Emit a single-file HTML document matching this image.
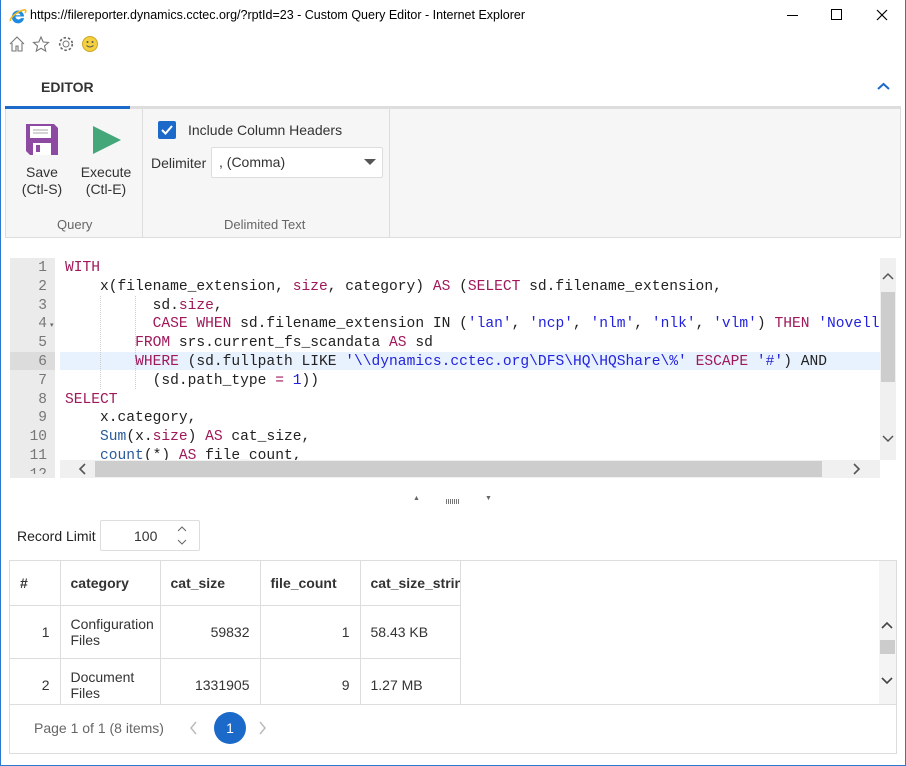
<!DOCTYPE html>
<html><head><style>
*{margin:0;padding:0;box-sizing:border-box}
body{width:906px;height:766px;overflow:hidden;background:#fff;font-family:"Liberation Sans",sans-serif;position:relative}
.a{position:absolute}
.code{font-family:"Liberation Mono",monospace;font-size:14.6px;white-space:pre;color:#222}
.k{color:#a0185a}.s{color:#2222dd}.f{color:#2a5a9a}.n{color:#2222dd}
.ln{font-family:"Liberation Mono",monospace;font-size:14.5px;color:#777;width:37px;text-align:right}
table{table-layout:fixed;border-collapse:collapse}
th,td{border-right:1px solid #ddd;border-bottom:1px solid #ddd;font-size:14px;color:#333;padding:0 10px;overflow:hidden;white-space:normal}
th{text-align:left;font-weight:bold;height:44px;white-space:nowrap}
td{height:53px}
</style></head><body>
<div class="a" style="left:0;top:0;width:906px;height:766px;border:1px solid #2b79d0;border-top:none"></div>
<svg class="a" style="left:9px;top:7px" width="18" height="18" viewBox="0 0 18 18"><path d="M3 9.5a6 6 0 0 1 12 0H6.5a3 3 0 0 0 5.5 1.6h3A6 6 0 0 1 3 9.5zm3.5-1.3h5a2.6 2.6 0 0 0-5 0z" fill="#1d8be0"/><path d="M1.5 14c-1-3 6-9 13-11 2.5-.7 2.8 1 1.5 3" fill="none" stroke="#f4b81b" stroke-width="1.6"/></svg>
<div class="a" style="left:30px;top:8px;font-size:12.5px;color:#000">https://filereporter.dynamics.cctec.org/?rptId=23 - Custom Query Editor - Internet Explorer</div>
<div class="a" style="left:787px;top:15px;width:11px;height:1px;background:#000"></div>
<div class="a" style="left:831px;top:9px;width:11px;height:11px;border:1px solid #000"></div>
<svg class="a" style="left:876px;top:9px" width="12" height="12"><path d="M1 1l10 10M11 1L1 11" stroke="#000" stroke-width="1.2"/></svg>
<svg class="a" style="left:8px;top:35px" width="90" height="18" viewBox="0 0 90 18"><path d="M2 9L9 2l7 7M4 8v8h4v-5h2v5h4V8" fill="none" stroke="#777" stroke-width="1.1"/><path d="M33 2l2.2 5 5.3.4-4 3.5 1.2 5.2-4.7-2.8-4.7 2.8 1.2-5.2-4-3.5 5.3-.4z" fill="none" stroke="#777" stroke-width="1.1"/><circle cx="58" cy="9" r="3" fill="none" stroke="#777"/><circle cx="58" cy="9" r="6.3" fill="none" stroke="#666" stroke-width="1.6" stroke-dasharray="2.5 2"/><circle cx="82" cy="9" r="7.5" fill="#f4d03f" stroke="#c9a62c"/><circle cx="79.5" cy="7" r="1" fill="#555"/><circle cx="84.5" cy="7" r="1" fill="#555"/><path d="M78.5 10.5q3.5 3 7 0" fill="none" stroke="#555"/></svg>
<div class="a" style="left:41px;top:79px;font-size:14px;font-weight:bold;color:#333">EDITOR</div>
<svg class="a" style="left:877px;top:82px" width="13" height="9"><path d="M1 7l5.5-5 5.5 5" fill="none" stroke="#1b6ac9" stroke-width="2"/></svg>
<div class="a" style="left:5px;top:106px;width:896px;height:3px;background:#ddd"></div>
<div class="a" style="left:5px;top:106px;width:125px;height:3px;background:#1b6ac9"></div>
<div class="a" style="left:5px;top:109px;width:896px;height:129px;background:#f6f6f6;border:1px solid #ddd;border-top:none"></div>
<div class="a" style="left:142px;top:109px;width:1px;height:129px;background:#ddd"></div>
<div class="a" style="left:389px;top:109px;width:1px;height:129px;background:#ddd"></div>
<svg class="a" style="left:26px;top:124px" width="32" height="31" viewBox="0 0 32 31"><path d="M0 0h28l4 4v27H4l-4-4z" fill="#8e4aa2"/><rect x="4" y="2" width="21" height="12" fill="#fff"/><path d="M7 6h15M7 9h15" stroke="#aaa"/><rect x="7" y="19" width="18" height="12" fill="#fff"/><rect x="10" y="21" width="4" height="7" fill="#8e4aa2"/></svg>
<svg class="a" style="left:92px;top:125px" width="30" height="30"><path d="M1 1l28 14L1 29z" fill="#43a77a"/></svg>
<div class="a" style="left:18px;top:164px;width:48px;text-align:center;font-size:14px;color:#333;line-height:17px">Save<br>(Ctl-S)</div>
<div class="a" style="left:78px;top:164px;width:56px;text-align:center;font-size:14px;color:#333;line-height:17px">Execute<br>(Ctl-E)</div>
<div class="a" style="left:57px;top:217px;font-size:13px;color:#666">Query</div>
<div class="a" style="left:158px;top:121px;width:18px;height:18px;background:#1b6ac9;border-radius:2px"></div>
<svg class="a" style="left:160px;top:123px" width="14" height="14"><path d="M2 7l3.5 3.5L12 3" fill="none" stroke="#fff" stroke-width="2"/></svg>
<div class="a" style="left:188px;top:122px;font-size:14px;color:#333">Include Column Headers</div>
<div class="a" style="left:151px;top:155px;font-size:14px;color:#333">Delimiter</div>
<div class="a" style="left:211px;top:147px;width:172px;height:31px;background:#fff;border:1px solid #ddd;border-radius:2px"></div>
<div class="a" style="left:219px;top:154px;font-size:14px;color:#333">, (Comma)</div>
<svg class="a" style="left:364px;top:159px" width="12" height="7"><path d="M0 0h12L6 6z" fill="#555"/></svg>
<div class="a" style="left:224px;top:217px;font-size:13px;color:#666">Delimited Text</div>
<div class="a" style="left:10px;top:258px;width:45px;height:220px;background:#ebebeb"></div>
<div class="a" style="left:10px;top:352px;width:45px;height:18px;background:#dcdcdc"></div>
<div class="a" style="left:60px;top:352px;width:820px;height:18px;background:#e8f2fe"></div>
<div class="a" style="left:100px;top:296px;height:93px;border-left:1px dotted #ccc"></div>
<div class="a" style="left:135px;top:296px;height:93px;border-left:1px dotted #ccc"></div>
<div class="a" style="left:0;top:259px;width:880px;height:215px;overflow:hidden">
<div class="a ln" style="left:10px;top:0;line-height:18.8px">1<br>2<br>3<br>4<br>5<br>6<br>7<br>8<br>9<br>10<br>11<br>12</div>
<div class="a" style="left:50px;top:62px;font-size:7px;color:#666">▾</div>
<div class="a code" style="left:65px;top:0;line-height:18.8px"><span class="k">WITH</span>
    x(filename_extension, <span class="k">size</span>, category) <span class="k">AS</span> (<span class="k">SELECT</span> sd.filename_extension,
          sd.<span class="k">size</span>,
          <span class="k">CASE WHEN</span> sd.filename_extension IN (<span class="s">'lan'</span>, <span class="s">'ncp'</span>, <span class="s">'nlm'</span>, <span class="s">'nlk'</span>, <span class="s">'vlm'</span>) <span class="k">THEN</span> <span class="s">'Novell</span>
        <span class="k">FROM</span> srs.current_fs_scandata <span class="k">AS</span> sd
        <span class="k">WHERE</span> (sd.fullpath LIKE <span class="s">'\\dynamics.cctec.org\DFS\HQ\HQShare\%'</span> <span class="k">ESCAPE</span> <span class="s">'#'</span>) AND
          (sd.path_type <span class="k">=</span> <span class="n">1</span>))
<span class="k">SELECT</span>
    x.category,
    <span class="f">Sum</span>(x.<span class="k">size</span>) <span class="k">AS</span> cat_size,
    <span class="f">count</span>(*) <span class="k">AS</span> file_count,</div>
</div>
<div class="a" style="left:880px;top:258px;width:16px;height:202px;background:#f0f0f0"></div>
<div class="a" style="left:881px;top:292px;width:14px;height:90px;background:#cdcdcd"></div>
<svg class="a" style="left:882px;top:272px" width="12" height="170"><path d="M1 7l5-5 5 5M1 164l5 5 5-5" fill="none" stroke="#555" stroke-width="1.5"/></svg>
<div class="a" style="left:60px;top:460px;width:820px;height:18px;background:#f0f0f0"></div>
<div class="a" style="left:95px;top:461px;width:727px;height:16px;background:#cdcdcd"></div>
<svg class="a" style="left:78px;top:462px" width="790" height="14"><path d="M7 2L2 7l5 5M776 2l5 5-5 5" fill="none" stroke="#555" stroke-width="1.6"/></svg>
<div class="a" style="left:413px;top:495px;font-size:7px;color:#666">▲</div>
<div class="a" style="left:446px;top:499px;width:14px;height:5px;background:repeating-linear-gradient(90deg,#777 0 1px,transparent 1px 2px)"></div>
<div class="a" style="left:485px;top:495px;font-size:7px;color:#666">▼</div>
<div class="a" style="left:17px;top:528px;font-size:14px;color:#222">Record Limit</div>
<div class="a" style="left:100px;top:520px;width:100px;height:31px;border:1px solid #ddd;border-radius:2px"></div>
<div class="a" style="left:134px;top:528px;font-size:14px;color:#333">100</div>
<svg class="a" style="left:177px;top:526px" width="10" height="20"><path d="M1 5l4-4 4 4M1 14l4 4 4-4" fill="none" stroke="#666"/></svg>
<div class="a" style="left:9px;top:560px;width:888px;height:194px;border:1px solid #ddd"></div>
<div class="a" style="left:879px;top:561px;width:17px;height:143px;background:#f4f4f4"></div>
<div class="a" style="left:880px;top:640px;width:15px;height:14px;background:#ccc"></div>
<svg class="a" style="left:881px;top:620px" width="12" height="70"><path d="M1 8l5-5 5 5M1 58l5 5 5-5" fill="none" stroke="#444" stroke-width="1.6"/></svg>
<table class="a" style="left:10px;top:561px;width:450px">
<colgroup><col style="width:50px"><col style="width:100px"><col style="width:100px"><col style="width:100px"><col style="width:100px"></colgroup>
<tr><th>#</th><th>category</th><th>cat_size</th><th>file_count</th><th style="padding-right:0">cat_size_string</th></tr>
<tr><td style="text-align:right">1</td><td>Configuration Files</td><td style="text-align:right">59832</td><td style="text-align:right">1</td><td>58.43 KB</td></tr>
<tr><td style="text-align:right">2</td><td>Document Files</td><td style="text-align:right">1331905</td><td style="text-align:right">9</td><td>1.27 MB</td></tr>
</table>
<div class="a" style="left:10px;top:704px;width:886px;height:49px;background:#fff;border-top:1px solid #ddd"></div>
<div class="a" style="left:34px;top:720px;font-size:14px;color:#666">Page 1 of 1 (8 items)</div>
<svg class="a" style="left:190px;top:721px" width="80" height="14"><path d="M6 1L1 7l5 6M70 1l5 6-5 6" fill="none" stroke="#bbb" stroke-width="1.5"/></svg>
<div class="a" style="left:214px;top:712px;width:32px;height:32px;border-radius:50%;background:#1b6ac9;color:#fff;font-size:14px;text-align:center;line-height:32px">1</div>
</body></html>
